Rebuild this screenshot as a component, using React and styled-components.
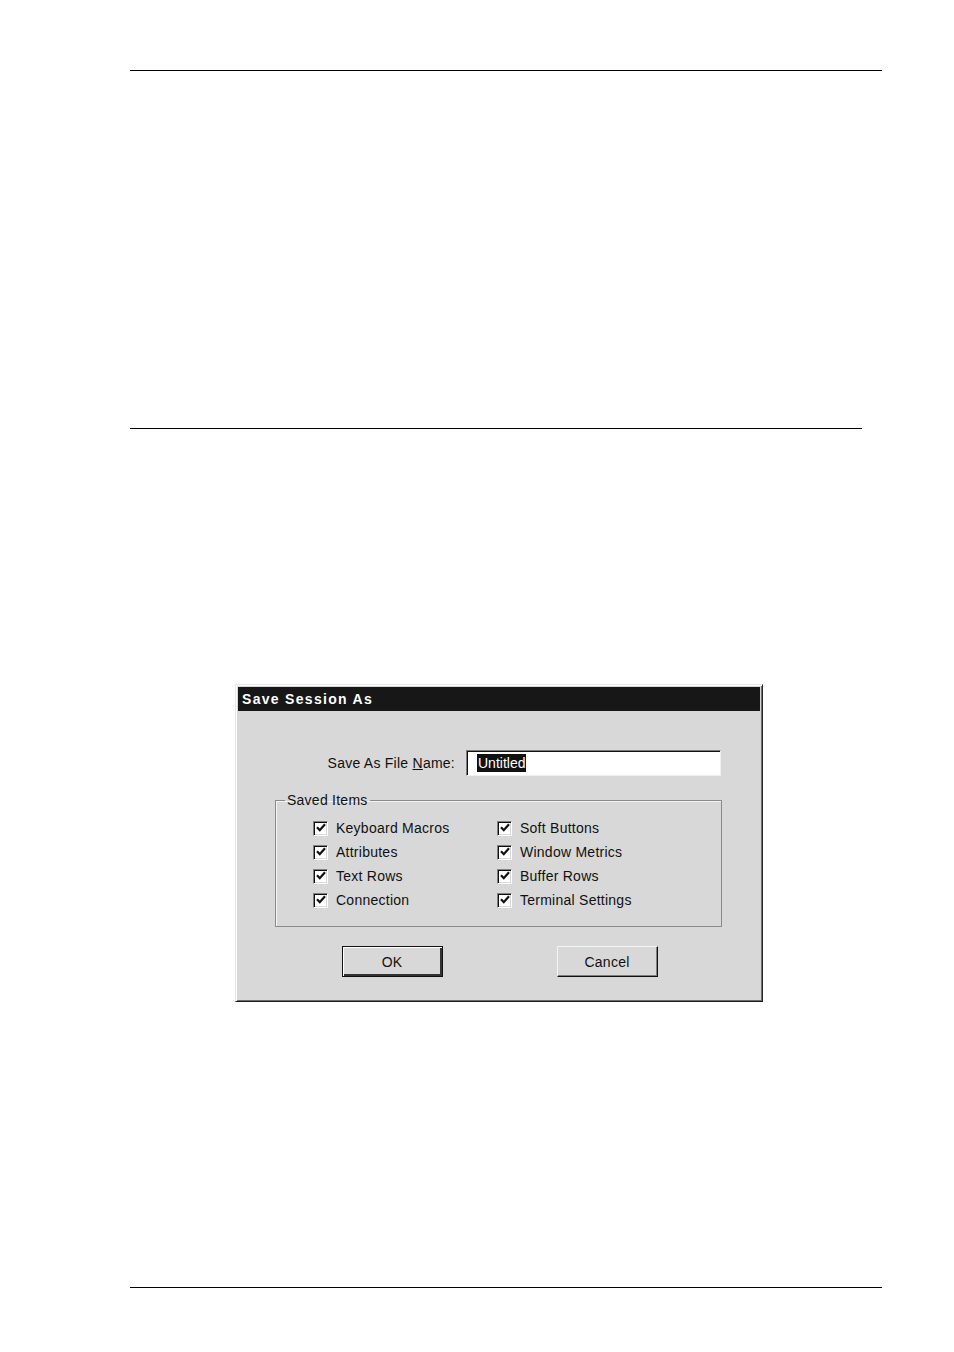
import React from "react";
import styled, { createGlobalStyle } from "styled-components";

const Global = createGlobalStyle`
  html, body { margin: 0; padding: 0; background: #fff; }
  body { font-family: "Liberation Sans", Arial, sans-serif; }
`;

const Page = styled.div`
  width: 954px;
  height: 1352px;
  display: flex;
  flex-direction: column;
  padding-left: 130px;
  box-sizing: border-box;
`;

const Rule = styled.div`
  width: ${(p) => p.$w}px;
  height: 1px;
  background: #000;
  margin-top: ${(p) => p.$top}px;
`;

const DialogWrap = styled.div`
  margin-top: ${(p) => p.$top}px;
  margin-left: 105px;
`;

const Dialog = styled.div`
  width: 528px;
  height: 318px;
  box-sizing: border-box;
  background: #d8d8d8;
  border-top: 1px solid #e8e8e8;
  border-left: 1px solid #e8e8e8;
  border-right: 1px solid #2a2a2a;
  border-bottom: 1px solid #1a1a1a;
  box-shadow: inset 1px 1px 0 #ffffff, inset -1px -1px 0 #6a6a6a;
  padding: 2px;
  display: flex;
  flex-direction: column;
`;

const TitleBar = styled.div`
  height: 24px;
  background: #171717;
  color: #fff;
  font-weight: bold;
  font-size: 14px;
  letter-spacing: 1.3px;
  display: flex;
  align-items: center;
  padding-left: 4px;
`;

const Body = styled.div`
  display: flex;
  flex-direction: column;
  padding: 39px 38px 0 37px;
  color: #111;
  font-size: 14px;
  letter-spacing: 0.25px;
`;

const FormRow = styled.div`
  display: flex;
  justify-content: flex-end;
  align-items: center;
  gap: 11px;
  padding-right: 1px;
`;

const Label = styled.span`
  u { text-decoration: underline; }
`;

const Input = styled.div`
  width: 255px;
  height: 26px;
  box-sizing: border-box;
  background: #fff;
  border-top: 1px solid #7a7a7a;
  border-left: 1px solid #7a7a7a;
  border-right: 1px solid #f0f0f0;
  border-bottom: 1px solid #f0f0f0;
  box-shadow: inset 1px 1px 0 #111;
  display: flex;
  align-items: center;
  padding-left: 10px;
`;

const Selected = styled.span`
  background: #111;
  color: #fff;
  padding: 1px 1px 1px 1px;
  letter-spacing: 0;
`;

const Group = styled.fieldset`
  margin: 17px 0 0 0;
  height: 134px;
  box-sizing: border-box;
  border: 1px solid #8a8a8a;
  box-shadow: 1px 1px 0 #f4f4f4 inset;
  padding: 0;
  min-width: 0;
`;

const Legend = styled.legend`
  margin-left: 9px;
  padding: 0 2px;
  line-height: 14px;
`;

const Grid = styled.div`
  padding: 9px 0 0 37px;
  display: grid;
  grid-template-columns: 184px 1fr;
  grid-template-rows: repeat(4, 24px);
  grid-auto-flow: column;
`;

const Item = styled.label`
  display: flex;
  align-items: center;
  gap: 8px;
  height: 24px;
`;

const Box = styled.span`
  width: 15px;
  height: 15px;
  box-sizing: border-box;
  background: #fff;
  border-top: 1px solid #808080;
  border-left: 1px solid #808080;
  border-right: 1px solid #fff;
  border-bottom: 1px solid #fff;
  box-shadow: inset 1px 1px 0 #111, inset -1px -1px 0 #d8d8d8;
  display: flex;
  align-items: center;
  justify-content: center;
`;

const Buttons = styled.div`
  display: flex;
  justify-content: center;
  gap: 114px;
  margin-top: 19px;
  padding-left: 2px;
`;

const Button = styled.div`
  width: 101px;
  height: 31px;
  box-sizing: border-box;
  display: flex;
  align-items: center;
  justify-content: center;
  background: #d8d8d8;
  border: 1px solid ${(p) => (p.$default ? "#111" : "transparent")};
  border-top-color: ${(p) => (p.$default ? "#111" : "#f4f4f4")};
  border-left-color: ${(p) => (p.$default ? "#111" : "#f4f4f4")};
  border-right-color: #111;
  border-bottom-color: #111;
  box-shadow: ${(p) =>
    p.$default
      ? "inset 1px 1px 0 #fff, inset -2px -2px 0 #333, inset -1px -1px 0 #808080"
      : "inset -1px -1px 0 #808080"};
  font-size: 14px;
  color: #111;
  letter-spacing: 0.25px;
`;

const Check = () => (
  <svg width="10" height="10" viewBox="0 0 10 10">
    <path d="M1 4.2 L3.8 7.2 L9 1.2" stroke="#111" strokeWidth="2.2" fill="none" />
  </svg>
);

const left = ["Keyboard Macros", "Attributes", "Text Rows", "Connection"];
const right = ["Soft Buttons", "Window Metrics", "Buffer Rows", "Terminal Settings"];

export default function App() {
  return (
    <Page>
      <Global />
      <Rule $top={70} $w={752} />
      <Rule $top={357} $w={732} />
      <DialogWrap $top={255}>
        <Dialog>
          <TitleBar>Save Session As</TitleBar>
          <Body>
            <FormRow>
              <Label>
                Save As File <u>N</u>ame:
              </Label>
              <Input>
                <Selected>Untitled</Selected>
              </Input>
            </FormRow>
            <Group>
              <Legend>Saved Items</Legend>
              <Grid>
                {[...left, ...right].map((t) => (
                  <Item key={t}>
                    <Box>
                      <Check />
                    </Box>
                    {t}
                  </Item>
                ))}
              </Grid>
            </Group>
            <Buttons>
              <Button $default>OK</Button>
              <Button>Cancel</Button>
            </Buttons>
          </Body>
        </Dialog>
      </DialogWrap>
      <Rule $top={285} $w={752} />
    </Page>
  );
}
